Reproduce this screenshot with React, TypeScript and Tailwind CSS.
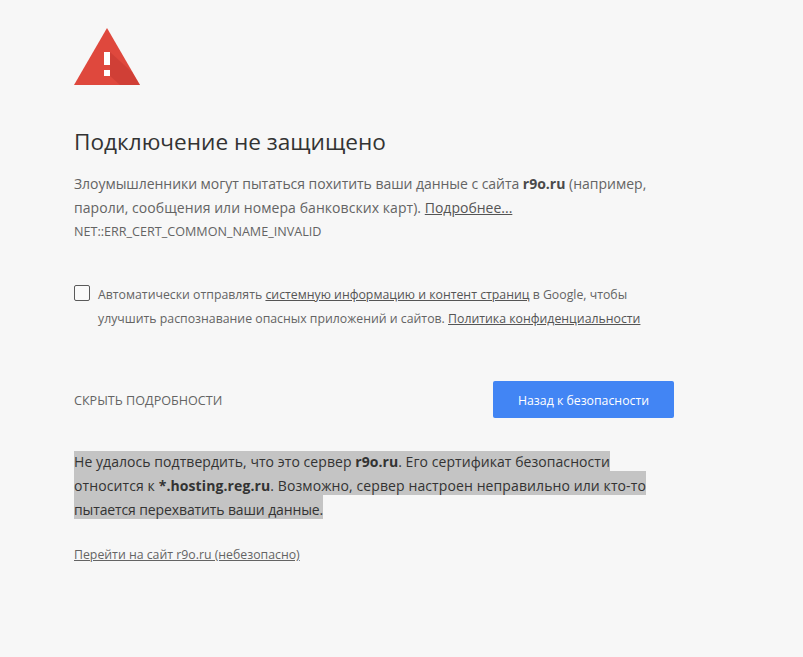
const font = { fontFamily: '"Open Sans", "Noto Sans", sans-serif' };

function WarningIcon() {
  return (
    <svg width="66" height="58" viewBox="0 0 66 58" className="block">
      <polygon points="33,0 66,57 0,57" fill="#df483d" />
      <polygon points="36,24 58,44 66,57 46,57 36,48" fill="#b5322a" opacity="0.35" />
      <rect x="30" y="24" width="6" height="13" fill="#ffffff" />
      <rect x="30" y="42" width="6" height="6" fill="#ffffff" />
    </svg>
  );
}

export default function App() {
  return (
    <div className="min-h-[657px] bg-[#f7f7f7] text-[#646464] overflow-hidden" style={font}>
      <div className="ml-[74px] w-[600px] pt-[28px]">
        <WarningIcon />

        <h1 className="mt-[40px] text-[22.6px] leading-[32px] text-[#333333] font-normal">
          Подключение не защищено
        </h1>

        <p className="mt-[14px] text-[14px] leading-[24px]">
          <span className="tracking-[-0.05px]">Злоумышленники могут пытаться похитить ваши данные с сайта</span>{" "}
          <strong className="text-[#4a4a4a] font-bold">r9o.ru</strong> (например,
          <br />
          <span className="tracking-[0.06px]">пароли, сообщения или номера банковских карт).</span>{" "}
          <a className="underline text-[#555555]">Подробнее...</a>
        </p>
        <div className="mt-px text-[12.6px] leading-[22px] uppercase">
          NET::ERR_CERT_COMMON_NAME_INVALID
        </div>

        <div className="mt-[40px] flex items-start gap-2">
          <div className="mt-[2px] w-4 h-4 shrink-0 rounded-[2px] border border-[#5a5a5a] bg-[#fafafa]" />
          <p className="text-[12.3px] leading-[24px]">
            Автоматически отправлять{" "}
            <a className="underline text-[#555555]">системную информацию и контент страниц</a> в Google, чтобы
            <br />
            улучшить распознавание опасных приложений и сайтов.{" "}
            <a className="underline text-[#555555]">Политика конфиденциальности</a>
          </p>
        </div>

        <div className="mt-[50px] flex items-center justify-between">
          <span className="pt-[3px] text-[12.6px] uppercase">Скрыть подробности</span>
          <button className="w-[181px] h-[37px] pt-[3px] rounded-[2px] bg-[#4285f4] text-white text-[12.3px] font-medium">
            Назад к безопасности
          </button>
        </div>

        <p className="mt-[32px] text-[14px] leading-[24px] text-[#333333]">
          <span className="bg-[#c4c4c4] pt-[1px] tracking-[0.06px]">
            Не удалось подтвердить, что это сервер <strong>r9o.ru</strong>. Его сертификат безопасности
          </span>
          <br />
          <span className="bg-[#c4c4c4] pt-[5px] tracking-[0.1px]">
            относится к <strong>*.hosting.reg.ru</strong>. Возможно, сервер настроен неправильно или кто-то
          </span>
          <br />
          <span className="bg-[#c4c4c4] pt-[5px] tracking-[-0.12px]">пытается перехватить ваши данные.</span>
        </p>

        <a className="block mt-[21px] text-[12.3px] leading-[24px] underline text-[#646464]">
          Перейти на сайт r9o.ru (небезопасно)
        </a>
      </div>
    </div>
  );
}
